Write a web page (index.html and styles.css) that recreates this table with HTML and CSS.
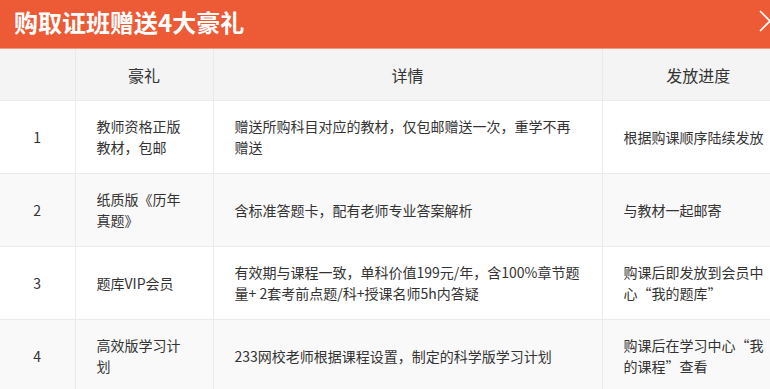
FILE: index.html
```html
<!DOCTYPE html>
<html lang="zh-CN">
<head>
<meta charset="utf-8">
<title>购取证班赠送4大豪礼</title>
<link rel="stylesheet" href="styles.css">
</head>
<body>
<div class="panel">
  <div class="bar">
    <h1 class="title">购取证班赠送4大豪礼</h1>
    <svg class="close" width="24" height="24" viewBox="0 0 24 24"><path d="M2 2 L22 22 M22 2 L2 22" stroke="#fff" stroke-width="1.6" fill="none"/></svg>
  </div>
  <table class="gifts">
    <colgroup>
      <col class="c1"><col class="c2"><col class="c3"><col class="c4">
    </colgroup>
    <thead>
      <tr><th></th><th>豪礼</th><th>详情</th><th>发放进度</th></tr>
    </thead>
    <tbody>
      <tr>
        <td class="num">1</td>
        <td>教师资格正版教材，包邮</td>
        <td>赠送所购科目对应的教材，仅包邮赠送一次，重学不再赠送</td>
        <td>根据购课顺序陆续发放</td>
      </tr>
      <tr class="alt">
        <td class="num">2</td>
        <td>纸质版《历年真题》</td>
        <td>含标准答题卡，配有老师专业答案解析</td>
        <td>与教材一起邮寄</td>
      </tr>
      <tr>
        <td class="num">3</td>
        <td>题库VIP会员</td>
        <td>有效期与课程一致，单科价值199元/年，含100%章节题量+ 2套考前点题/科+授课名师5h内答疑</td>
        <td>购课后即发放到会员中心“我的题库”</td>
      </tr>
      <tr class="alt">
        <td class="num">4</td>
        <td>高效版学习计划</td>
        <td>233网校老师根据课程设置，制定的科学版学习计划</td>
        <td>购课后在学习中心“我的课程”查看</td>
      </tr>
    </tbody>
  </table>
</div>
</body>
</html>
```
FILE: styles.css
```css
html, body {
  margin: 0;
  padding: 0;
  background: #fff;
  overflow: hidden;
}
body {
  font-family: "Noto Sans CJK SC", "Microsoft YaHei", sans-serif;
  color: #333;
}
.panel {
  width: 794px;
}
.bar {
  height: 48px;
  background: #ec5a36;
  border-bottom: 1px solid #f29a7e;
  display: flex;
  align-items: center;
  justify-content: space-between;
  padding: 0 0 0 14px;
  box-sizing: content-box;
  position: relative;
}
.title {
  margin: 0;
  font-size: 24px;
  font-weight: bold;
  color: #fff;
  line-height: 30px;
  margin-top: -4px;
  letter-spacing: 0;
}
.close {
  margin-right: 12px;
  margin-top: -6px;
}
.gifts {
  border-collapse: collapse;
  table-layout: fixed;
  width: 794px;
}
.c1 { width: 75px; }
.c2 { width: 138px; }
.c3 { width: 389px; }
.c4 { width: 192px; }
.gifts th {
  background: #f4f4f4;
  font-weight: normal;
  font-size: 16px;
  color: #333;
  height: 51px;
  padding: 0;
  line-height: 20px;
  text-align: center;
  border-left: 1px solid #e9e9e9;
  border-bottom: 1px solid #ebebeb;
}
.gifts th:first-child { border-left: none; }
.gifts td {
  font-size: 14px;
  line-height: 21px;
  color: #333;
  padding: 15px 20px 15px 21px;
  height: 42px;
  vertical-align: middle;
  text-align: left;
  border-left: 1px solid #ebebeb;
  border-bottom: 1px solid #ebebeb;
}
.gifts td:first-child { border-left: none; }
.gifts td.num {
  text-align: center;
  padding-left: 0;
  padding-right: 0;
}
.gifts tr.alt td {
  background: #f9f9f9;
}
```
